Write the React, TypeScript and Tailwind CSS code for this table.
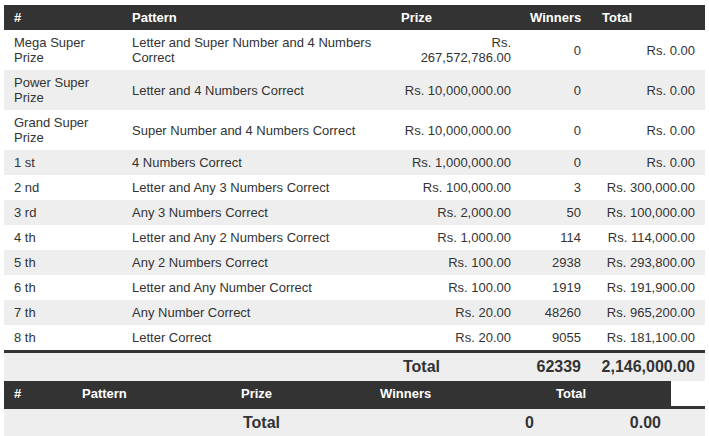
const rows = [
  { n: "Mega Super Prize", p: "Letter and Super Number and 4 Numbers Correct", prize: "Rs. 267,572,786.00", w: "0", t: "Rs. 0.00" },
  { n: "Power Super Prize", p: "Letter and 4 Numbers Correct", prize: "Rs. 10,000,000.00", w: "0", t: "Rs. 0.00" },
  { n: "Grand Super Prize", p: "Super Number and 4 Numbers Correct", prize: "Rs. 10,000,000.00", w: "0", t: "Rs. 0.00" },
  { n: "1 st", p: "4 Numbers Correct", prize: "Rs. 1,000,000.00", w: "0", t: "Rs. 0.00" },
  { n: "2 nd", p: "Letter and Any 3 Numbers Correct", prize: "Rs. 100,000.00", w: "3", t: "Rs. 300,000.00" },
  { n: "3 rd", p: "Any 3 Numbers Correct", prize: "Rs. 2,000.00", w: "50", t: "Rs. 100,000.00" },
  { n: "4 th", p: "Letter and Any 2 Numbers Correct", prize: "Rs. 1,000.00", w: "114", t: "Rs. 114,000.00" },
  { n: "5 th", p: "Any 2 Numbers Correct", prize: "Rs. 100.00", w: "2938", t: "Rs. 293,800.00" },
  { n: "6 th", p: "Letter and Any Number Correct", prize: "Rs. 100.00", w: "1919", t: "Rs. 191,900.00" },
  { n: "7 th", p: "Any Number Correct", prize: "Rs. 20.00", w: "48260", t: "Rs. 965,200.00" },
  { n: "8 th", p: "Letter Correct", prize: "Rs. 20.00", w: "9055", t: "Rs. 181,100.00" },
];

const App = () => {
  return (
    <div className="bg-white w-[709px] h-[436px] overflow-hidden pl-[4px] pt-[5px] text-[13px] leading-[15px] text-[#333]" style={{ fontFamily: '"Liberation Sans", Arial, sans-serif' }}>
      <table className="w-[701px] border-collapse table-fixed">
        <colgroup>
          <col className="w-[118px]" />
          <col className="w-[269px]" />
          <col className="w-[130px]" />
          <col className="w-[70px]" />
          <col className="w-[114px]" />
        </colgroup>
        <thead>
          <tr className="bg-[#333] text-white font-bold h-[25px]">
            <th className="text-left px-[10px] py-[5px]">#</th>
            <th className="text-left px-[10px] py-[5px]">Pattern</th>
            <th className="text-left px-[10px] py-[5px]">Prize</th>
            <th className="text-left px-[9px] py-[5px]">Winners</th>
            <th className="text-left px-[11px] py-[5px]">Total</th>
          </tr>
        </thead>
        <tbody>
          {rows.map((r, i) => (
            <tr key={r.n} className={i % 2 === 1 ? "bg-[#eeeeee]" : "bg-white"}>
              <td className="px-[10px] py-[5px] align-middle">{r.n}</td>
              <td className="px-[10px] py-[5px] align-middle">{r.p}</td>
              <td className="px-[10px] py-[5px] align-middle text-right">{r.prize}</td>
              <td className="px-[10px] py-[5px] align-middle text-right">{r.w}</td>
              <td className="px-[10px] py-[5px] align-middle text-right">{r.t}</td>
            </tr>
          ))}
          <tr className="bg-[#eeeeee] border-t-[3px] border-[#333] font-bold text-[16px] leading-[18px] h-[28px]">
            <td colSpan={2}></td>
            <td className="pl-[12px] py-[5px] text-left">Total</td>
            <td className="px-[10px] py-[5px] text-right">62339</td>
            <td className="px-[10px] py-[5px] text-right">2,146,000.00</td>
          </tr>
        </tbody>
      </table>

      <table className="w-[701px] border-collapse table-fixed">
        <colgroup>
          <col className="w-[68px]" />
          <col className="w-[159px]" />
          <col className="w-[139px]" />
          <col className="w-[176px]" />
          <col className="w-[125px]" />
          <col className="w-[34px]" />
        </colgroup>
        <thead>
          <tr className="text-white font-bold h-[25px]">
            <th className="bg-[#333] text-left px-[10px] py-[5px]">#</th>
            <th className="bg-[#333] text-left px-[10px] py-[5px]">Pattern</th>
            <th className="bg-[#333] text-left px-[10px] py-[5px]">Prize</th>
            <th className="bg-[#333] text-left px-[10px] py-[5px]">Winners</th>
            <th className="bg-[#333] text-left px-[10px] py-[5px]">Total</th>
            <th className="bg-white"></th>
          </tr>
        </thead>
        <tbody>
          <tr className="bg-[#eeeeee] border-t-[3px] border-[#333] font-bold text-[16px] leading-[18px] h-[30px]">
            <td colSpan={2}></td>
            <td className="pl-[12px] py-[5px] text-left">Total</td>
            <td className="px-[12px] py-[5px] text-right">0</td>
            <td className="px-[10px] py-[5px] text-right">0.00</td>
            <td></td>
          </tr>
        </tbody>
      </table>
    </div>
  );
};

export default App;
